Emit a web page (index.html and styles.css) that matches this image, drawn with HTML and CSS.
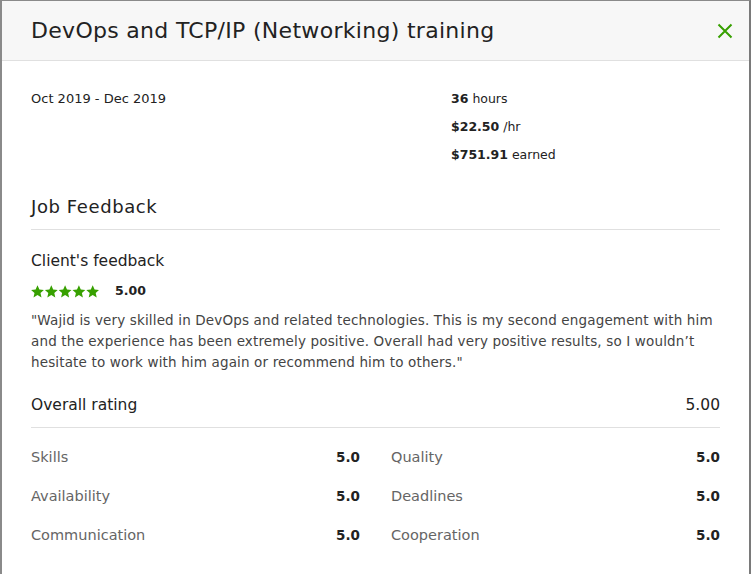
FILE: index.html
```html
<!DOCTYPE html>
<html lang="en">
<head>
<meta charset="UTF-8">
<meta name="viewport" content="width=device-width, initial-scale=1.0">
<title>DevOps and TCP/IP (Networking) training</title>
<link rel="stylesheet" href="styles.css">
</head>
<body>
    <div class="modal">
        <div class="modal-header">
            <h1 class="modal-title">DevOps and TCP/IP (Networking) training</h1>
            <button class="close-btn" aria-label="Close">
                <svg width="16" height="16" viewBox="0 0 16 16">
                    <path d="M1.5 1.5 L14.5 14.5 M14.5 1.5 L1.5 14.5" stroke="#37a000" stroke-width="2" fill="none"/>
                </svg>
            </button>
        </div>
        <div class="modal-body">
            <div class="job-info">
                <div class="job-dates">Oct 2019 - Dec 2019</div>
                <div class="job-stats">
                    <div><strong>36</strong> hours</div>
                    <div><strong>$22.50</strong> /hr</div>
                    <div><strong>$751.91</strong> earned</div>
                </div>
            </div>

            <h2 class="section-title">Job Feedback</h2>

            <h3 class="sub-title">Client's feedback</h3>
            <div class="rating-row">
                <div class="stars">
                    <svg width="68" height="13" viewBox="0 0 68 13">
                        <defs>
                            <path id="star" d="M6.5 0.3 L8.4 4.4 L12.9 4.9 L9.5 7.9 L10.5 12.4 L6.5 10.1 L2.5 12.4 L3.5 7.9 L0.1 4.9 L4.6 4.4 Z"/>
                        </defs>
                        <use href="#star" x="0" fill="#37a000"/>
                        <use href="#star" x="13.8" fill="#37a000"/>
                        <use href="#star" x="27.6" fill="#37a000"/>
                        <use href="#star" x="41.4" fill="#37a000"/>
                        <use href="#star" x="55.2" fill="#37a000"/>
                    </svg>
                </div>
                <strong class="rating-score">5.00</strong>
            </div>
            <p class="feedback-text">"Wajid is very skilled in DevOps and related technologies. This is my second engagement with him and the experience has been extremely positive. Overall had very positive results, so I wouldn’t hesitate to work with him again or recommend him to others."</p>

            <div class="overall">
                <span>Overall rating</span>
                <span>5.00</span>
            </div>

            <div class="scores">
                <div class="score"><span class="score-label">Skills</span><strong>5.0</strong></div>
                <div class="score"><span class="score-label">Quality</span><strong>5.0</strong></div>
                <div class="score"><span class="score-label">Availability</span><strong>5.0</strong></div>
                <div class="score"><span class="score-label">Deadlines</span><strong>5.0</strong></div>
                <div class="score"><span class="score-label">Communication</span><strong>5.0</strong></div>
                <div class="score"><span class="score-label">Cooperation</span><strong>5.0</strong></div>
            </div>
        </div>
    </div>
</body>
</html>
```

FILE: styles.css
```css
body {
    margin: 0;
    padding: 0;
    background-color: #ffffff;
    font-family: "DejaVu Sans", Arial, sans-serif;
    color: #222;
}
.modal {
    width: 751px;
    height: 574px;
    box-sizing: border-box;
    border-left: 2px solid #8a8a8a;
    border-top: 1px solid #8a8a8a;
    border-right: 2px solid #7a7a7a;
    background-color: #fff;
    overflow: hidden;
}
.modal-header {
    display: flex;
    align-items: center;
    justify-content: space-between;
    height: 59px;
    padding: 0 16px 0 29px;
    background-color: #f7f7f7;
    border-bottom: 1px solid #e0e0e0;
}
.modal-title {
    margin: 0;
    font-size: 22px;
    font-weight: 400;
    letter-spacing: 0.3px;
    line-height: 28px;
    color: #222;
}
.close-btn {
    background: none;
    border: none;
    padding: 0;
    width: 16px;
    height: 16px;
    cursor: pointer;
}
.modal-body {
    padding: 24px 29px 0 29px;
}
.job-info {
    display: flex;
    line-height: 28px;
}
.job-dates {
    width: 420px;
    font-size: 13px;
}
.job-stats {
    font-size: 12.5px;
}
.section-title {
    margin: 26px 0 0;
    padding-bottom: 10px;
    font-size: 18px;
    font-weight: 400;
    letter-spacing: 0.6px;
    line-height: 24px;
    border-bottom: 1px solid #e0e0e0;
}
.sub-title {
    margin: 20px 0 0;
    font-size: 15.5px;
    font-weight: 400;
    line-height: 22px;
}
.rating-row {
    display: flex;
    align-items: center;
    gap: 16px;
    height: 16px;
    margin-top: 11px;
}
.stars svg {
    display: block;
}
.rating-score {
    font-size: 12.5px;
    line-height: 16px;
}
.feedback-text {
    margin: 11px 0 0;
    font-size: 13.5px;
    letter-spacing: 0.15px;
    line-height: 21px;
    color: #444;
}
.overall {
    display: flex;
    justify-content: space-between;
    margin-top: 21px;
    padding-bottom: 11px;
    font-size: 15.5px;
    line-height: 22px;
    border-bottom: 1px solid #e0e0e0;
}
.scores {
    display: grid;
    grid-template-columns: 1fr 1fr;
    column-gap: 31px;
    row-gap: 19px;
    margin-top: 19px;
    font-size: 14.5px;
    line-height: 20px;
}
.score {
    display: flex;
    justify-content: space-between;
}
.score strong {
    font-size: 13.5px;
}
.score-label {
    color: #656565;
}
```
